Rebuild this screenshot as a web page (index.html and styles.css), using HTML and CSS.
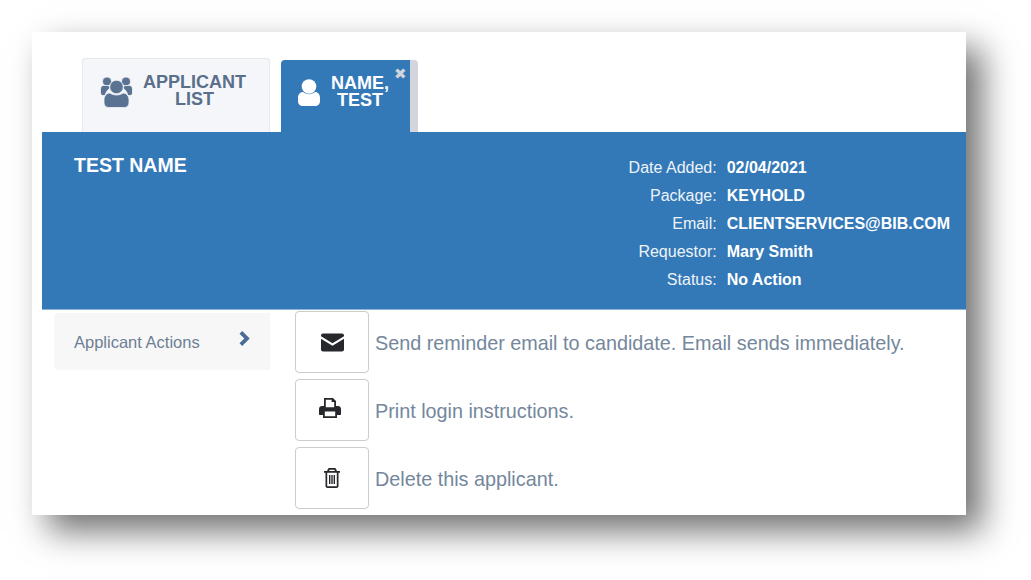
FILE: index.html
```html
<!DOCTYPE html>
<html lang="en">
<head>
  <meta charset="UTF-8">
  <title>Applicant</title>
  <link rel="stylesheet" href="styles.css">
</head>
<body>
  <div class="card">
    <div class="tabs">
      <div class="tab tab-list">
        <svg width="33" height="31" viewBox="0 0 33 31">
          <circle cx="7" cy="4.500" r="4.500"/>
          <circle cx="26" cy="4.500" r="4.500"/>
          <path d="M.5 12c0-2 1.500-3.500 3-3.500h5L10 11c-2.500 2-4 4-5 7.500H3c-1.500 0-2.500-1-2.500-2.500zM32.500 12c0-2-1.500-3.500-3-3.500h-5L23 11c2.500 2 4 4 5 7.500h2c1.500 0 2.500-1 2.500-2.500z"/>
          <circle cx="16.500" cy="10" r="6.800"/>
          <path d="M4 23c0-4 2.500-7 6-7 1.500 1.200 4 2 6.500 2s5-.8 6.500-2c3.500 0 6 3 6 7v3c0 2.500-2 4.500-4.500 4.500h-16C6 30.500 4 28.500 4 26z"/>
        </svg>
        <div class="tab-label">APPLICANT<br>LIST</div>
      </div>
      <div class="tab tab-active">
        <svg width="22" height="27" viewBox="0 0 22 27">
          <circle cx="11" cy="7.500" r="7.300"/>
          <path d="M5 13c1.500 1.300 3.800 2.200 6 2.200s4.500-.9 6-2.200c3 0 5 2.500 5 5.500v3.500c0 3-2 5-5 5H5c-3 0-5-2-5-5v-3.500C0 15.500 2 13 5 13z"/>
        </svg>
        <div class="tab-label">NAME,<br>TEST</div>
        <span class="tab-close">✖</span>
      </div>
    </div>

    <div class="banner">
      <h2 class="banner-name">TEST NAME</h2>
      <table class="details">
        <tr><td class="details-key">Date Added:</td><td class="details-val">02/04/2021</td></tr>
        <tr><td class="details-key">Package:</td><td class="details-val">KEYHOLD</td></tr>
        <tr><td class="details-key">Email:</td><td class="details-val">CLIENTSERVICES@BIB.COM</td></tr>
        <tr><td class="details-key">Requestor:</td><td class="details-val">Mary Smith</td></tr>
        <tr><td class="details-key">Status:</td><td class="details-val">No Action</td></tr>
      </table>
    </div>

    <div class="content">
      <div class="side">
        <div class="side-item">
          <span>Applicant Actions</span>
          <svg width="12" height="15" viewBox="0 0 12 15"><path d="M1.500 2.700 4.200 0l7.500 7.500L4.200 15l-2.700-2.700 4.800-4.800z"/></svg>
        </div>
      </div>
      <div class="actions">
        <div class="action">
          <div class="action-btn">
            <svg width="23" height="19" viewBox="0 0 23 18"><path d="M2 0h19c1.100 0 2 .9 2 2v.8l-11.500 7L0 2.800V2C0 .9.900 0 2 0zM0 5.300l11.500 7 11.500-7V16c0 1.100-.9 2-2 2H2c-1.100 0-2-.9-2-2z"/></svg>
          </div>
          <span class="action-text">Send reminder email to candidate. Email sends immediately.</span>
        </div>
        <div class="action">
          <div class="action-btn">
            <svg class="icon-print" width="22" height="20" viewBox="0 0 22 20"><path fill-rule="evenodd" d="M5 0h9l3 3v5h2c1.700 0 3 1.300 3 3v5c0 .6-.4 1-1 1h-3v3H4v-3H1c-.6 0-1-.4-1-1v-5c0-1.700 1.300-3 3-3h2zm1.800 1.800v7.400h8.400V4h-2.600V1.800zM5.800 13.500v4.700h10.400v-4.700z"/></svg>
          </div>
          <span class="action-text">Print login instructions.</span>
        </div>
        <div class="action">
          <div class="action-btn">
            <svg width="18" height="20" viewBox="0 0 17 20"><path fill-rule="evenodd" d="M6 0h5c.8 0 1.400.5 1.700 1.200L13.400 3H16.500v1.800H15V18c0 1.100-.9 2-2 2H4c-1.100 0-2-.9-2-2V4.800H.5V3h3.100l.7-1.800C4.600.5 5.200 0 6 0zm-.4 3h5.800l-.5-1.300H6.100zM3.700 4.800V18c0 .2.100.3.3.3h9c.2 0 .3-.1.300-.3V4.800zM5.500 7h1.400v9H5.500zm2.300 0h1.400v9H7.800zm2.300 0h1.400v9h-1.400z"/></svg>
          </div>
          <span class="action-text">Delete this applicant.</span>
        </div>
      </div>
    </div>
  </div>
</body>
</html>
```

FILE: styles.css
```css
html, body {
  margin: 0;
  height: 580px;
  overflow: hidden;
  background-color: #fff;
}
body {
  padding: 32px 65px 0 32px;
  box-sizing: border-box;
  font-family: "Liberation Sans", Arial, sans-serif;
}
.card {
  height: 483px;
  padding-left: 10px;
  background-color: #fff;
  box-shadow: 16px 16px 32px rgba(0,0,0,0.56);
}
.tabs {
  display: flex;
  align-items: flex-end;
  gap: 11px;
  height: 100px;
  padding-left: 40px;
  box-sizing: border-box;
}
.tab {
  display: flex;
  box-sizing: border-box;
  border-radius: 4px 4px 0 0;
}
.tab-label {
  font-size: 18px;
  font-weight: bold;
  line-height: 17px;
  text-align: center;
}
.tab-list {
  width: 188px;
  height: 74px;
  padding: 15px 0 0 17px;
  gap: 10px;
  background-color: #f5f6fa;
  border: 1px solid #e6e8ee;
  border-bottom: none;
  color: #5a6f8a;
}
.tab-list svg {
  fill: #5a7392;
  stroke: #f5f6fa;
  stroke-width: 0.8;
  flex: none;
  margin-top: 3px;
}
.tab-active {
  position: relative;
  width: 137px;
  height: 72px;
  padding: 15px 0 0 17px;
  gap: 11px;
  background-color: #3379b7;
  border-right: 8px solid #d2d5db;
  color: #fff;
}
.tab-active svg {
  fill: #fff;
  flex: none;
  margin-top: 4px;
}
.tab-close {
  position: absolute;
  top: 6px;
  right: 3px;
  font-size: 15px;
  line-height: 15px;
  color: #d2d5db;
}
.banner {
  display: flex;
  justify-content: space-between;
  height: 178px;
  box-sizing: border-box;
  padding: 22px 16px 0 32px;
  background-color: #3379b7;
  border-bottom: 1px solid #8fb3d6;
  color: #fff;
}
.banner-name {
  margin: 0;
  font-size: 19.500px;
  line-height: 23px;
  font-weight: bold;
}
.details {
  border-collapse: collapse;
  align-self: flex-start;
  font-size: 16px;
  line-height: 28px;
}
.details td {
  padding: 0;
  white-space: nowrap;
}
.details-key {
  text-align: right;
  padding-right: 10px !important;
  color: #eef3f9;
}
.details-val {
  font-weight: bold;
}
.content {
  display: flex;
  padding-left: 12px;
}
.side {
  width: 216px;
  flex: none;
  padding-top: 3px;
}
.side-item {
  display: flex;
  justify-content: space-between;
  height: 57px;
  box-sizing: border-box;
  padding: 18px 20px 0 20px;
  background-color: #f7f7f7;
  border-radius: 4px 0 0 4px;
  font-size: 16.500px;
  line-height: 22px;
  color: #6d7f96;
}
.side-item svg {
  fill: #4a6d96;
}
.actions {
  flex: 1;
  padding: 1px 0 0 25px;
}
.action {
  display: flex;
  align-items: center;
  gap: 6px;
  margin-bottom: 6px;
  font-size: 19.800px;
  color: #74879c;
}
.action-text {
  padding-top: 3px;
}
.action-btn {
  display: flex;
  align-items: center;
  justify-content: center;
  width: 74px;
  height: 62px;
  box-sizing: border-box;
  background-color: #fff;
  border: 1px solid #ccc;
  border-radius: 4px;
}
.action-btn svg {
  fill: #26282c;
}
.action-btn .icon-print {
  margin: 0 4px 5px 0;
}
```
